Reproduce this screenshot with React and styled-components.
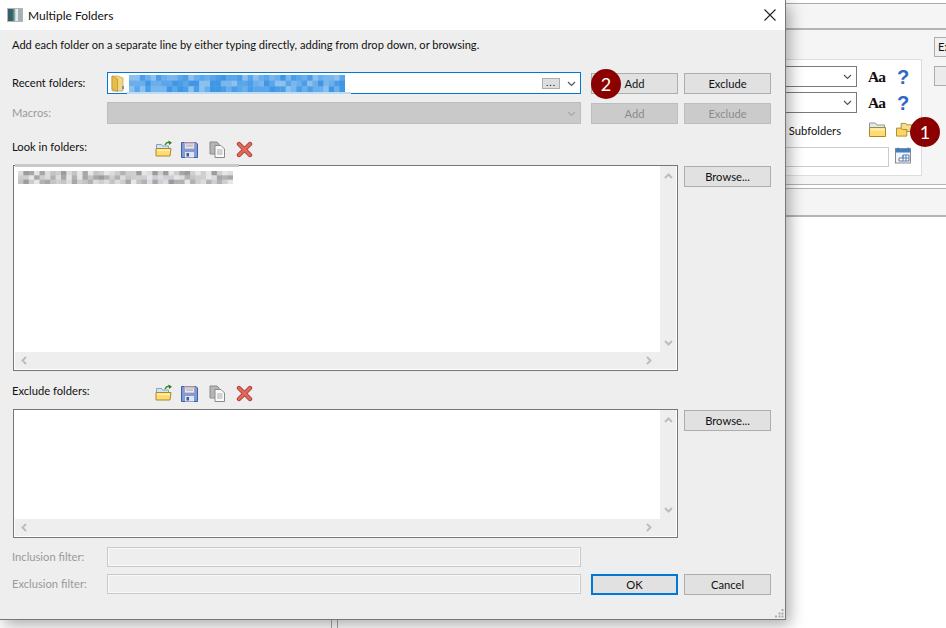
import React from "react";
import styled, { createGlobalStyle } from "styled-components";

const GlobalStyle = createGlobalStyle`
  html, body { margin: 0; padding: 0; background: #fff; }
  body { font-family: "Lato", "Noto Sans", sans-serif; font-size: 11.2px; color: #111; }
`;

// seeded noise so the blurred out paths stay the same every render
function noise(seed) {
  let s = seed;
  return () => {
    s = (s * 9301 + 49297) % 233280;
    return s / 233280;
  };
}

function Mosaic({ width, height, cols, rows, colors, seed }) {
  const rand = noise(seed);
  const cw = width / cols;
  const ch = height / rows;
  const cells = [];
  for (let y = 0; y < rows; y++) {
    for (let x = 0; x < cols; x++) {
      cells.push(
        <rect
          key={x + "-" + y}
          x={x * cw}
          y={y * ch}
          width={cw + 0.5}
          height={ch + 0.5}
          fill={colors[Math.floor(rand() * colors.length)]}
        />
      );
    }
  }
  return (
    <svg width={width} height={height} style={{ display: "block" }}>
      {cells}
    </svg>
  );
}

const Chevron = ({ dir = "down", color = "#555", size = 11, width = 1.2 }) => {
  const d = {
    down: "M2 4l3.5 3.5L9 4",
    up: "M2 7l3.5-3.5L9 7",
    left: "M7 2L3.5 5.5 7 9",
    right: "M4 2l3.5 3.5L4 9",
  }[dir];
  return (
    <svg width={size} height={size} viewBox="0 0 11 11">
      <path d={d} fill="none" stroke={color} strokeWidth={width} />
    </svg>
  );
};

const FolderOpenIcon = () => (
  <svg width="18" height="18" viewBox="0 0 18 18">
    <path d="M1.5 4.5h5l1 1.5h6v3h-12z" fill="#cfe4f5" stroke="#8aa2b5" />
    <path d="M1 8.5h15l-1 7.5H1z" fill="#ffdb70" stroke="#a98a2a" />
    <path d="M2 9.5h13l-.2 1.5H2z" fill="#fff0b8" />
    <path d="M10 5c1-2 3-3 5-2.500" fill="none" stroke="#3d8a2c" strokeWidth="1.500" />
    <path d="M13.500 .5L17 2.800l-3 2.200z" fill="#2f7d22" />
  </svg>
);

const SaveIcon = () => (
  <svg width="17" height="17" viewBox="0 0 17 17">
    <path d="M.5 1.500h14.500l1.500 1.500v13.500H.5z" fill="#7f9cd8" stroke="#41609f" />
    <rect x="3.500" y="1.500" width="10" height="6.500" fill="#ece6ee" stroke="#9a8fa8" strokeWidth=".7" />
    <path d="M3.500 2h10v1.500h-10z" fill="#d8b4c4" />
    <path d="M5 5h7" stroke="#9aa" />
    <rect x="4" y="11" width="9" height="5.500" fill="#dfe5f2" />
    <rect x="5.500" y="12" width="2.500" height="3.500" fill="#44598c" />
  </svg>
);

const CopyIcon = () => (
  <svg width="17" height="17" viewBox="0 0 17 17">
    <path d="M1 1h7l2 2v10H1z" fill="#b5b5b5" stroke="#8a8a8a" />
    <path d="M6 4.500h6l3.500 3.500v8.500H6z" fill="#fafafa" stroke="#8a8a8a" />
    <path d="M8 9h5.500M8 11h5.500M8 13h5.500" stroke="#a8a8a8" />
  </svg>
);

const DeleteIcon = () => (
  <svg width="17" height="17" viewBox="0 0 17 17">
    <path d="M3 3l11 11M14 3L3 14" stroke="#a33a30" strokeWidth="4.400" strokeLinecap="round" />
    <path d="M3 3l11 11M14 3L3 14" stroke="#e2685c" strokeWidth="2.800" strokeLinecap="round" />
  </svg>
);

const ComboFolderIcon = () => (
  <svg width="14" height="17" viewBox="0 0 14 17">
    <path d="M1 1h6l5 2v13H1z" fill="#f2d681" stroke="#c6a94e" strokeWidth=".8" />
    <path d="M1 1l5.500 3v12.500L1 14z" fill="#e8bd4a" stroke="#b89637" strokeWidth=".8" />
    <rect x="11" y="11" width="2" height="3" fill="#5a9ad0" />
  </svg>
);

const PlainFolderIcon = () => (
  <svg width="17" height="16" viewBox="0 0 17 16">
    <path d="M.5 1h6l1.500 2h7.500v3H.5z" fill="#dce9f4" stroke="#8f9aa5" />
    <path d="M.5 5.500h16v9H.5z" fill="#ffdb70" stroke="#a98a2a" />
    <path d="M1.500 6.500h14v2h-14z" fill="#fff0b8" />
  </svg>
);

const TwoFoldersIcon = () => (
  <svg width="16" height="16" viewBox="0 0 17 16">
    <path d="M5.500 1h5l1 1.500h5v7h-11z" fill="#f6dd92" stroke="#a98a2a" />
    <path d="M.5 6h5l1 1.500h5v7H.5z" fill="#ffd566" stroke="#a98a2a" />
  </svg>
);

const CalendarIcon = () => (
  <svg width="17" height="17" viewBox="0 0 17 17">
    <rect x=".5" y="1.500" width="15" height="14.500" fill="#f4f4f4" stroke="#8c8c8c" />
    <path d="M.5 2h15v3.500H.5z" fill="#3e7fc9" />
    <path d="M3 .5v2.500M13 .5v2.500" stroke="#3a6ca5" />
    <path d="M8 8h6v6H4v-3h4z" fill="#fff" stroke="#5a7fb0" />
    <path d="M8 11h6M8 8v6M11 8v6" stroke="#5a7fb0" />
  </svg>
);

const GripDots = () => (
  <svg width="9" height="9" viewBox="0 0 9 9" fill="#aaa">
    <rect x="6.500" y="0" width="2" height="2" />
    <rect x="3.500" y="3.500" width="2" height="2" />
    <rect x="6.500" y="3.500" width="2" height="2" />
    <rect x="0" y="6.500" width="2" height="2" />
    <rect x="3.500" y="6.500" width="2" height="2" />
    <rect x="6.500" y="6.500" width="2" height="2" />
  </svg>
);

function App() {
  return (
    <Screen>
      <GlobalStyle />
      <BackWindow>
        <TopStrip />
        <ToolStrip />
        <SearchArea>
          <SearchPanel>
            <PanelRow>
              <BackSelect>
                <Chevron />
              </BackSelect>
              <AaGlyph>Aa</AaGlyph>
              <HelpGlyph>?</HelpGlyph>
            </PanelRow>
            <PanelRow>
              <BackSelect>
                <Chevron />
              </BackSelect>
              <AaGlyph>Aa</AaGlyph>
              <HelpGlyph>?</HelpGlyph>
            </PanelRow>
            <FolderRow>
              <SubfolderBox />
              <SubfolderLabel>Subfolders</SubfolderLabel>
              <PlainFolderIcon />
              <TwoFoldersIcon />
            </FolderRow>
            <DateRow>
              <BackInput />
              <CalendarIcon />
            </DateRow>
          </SearchPanel>
          <SideButtons>
            <SideButton>Exclude</SideButton>
            <SideButton $tinted />
          </SideButtons>
        </SearchArea>
        <SplitStrip />
        <ResultPanes>
          <LeftPane />
          <Splitter />
        </ResultPanes>
      </BackWindow>

      <Badge $right={6} $top={117}>1</Badge>

      <Dialog>
        <TitleBar>
          <TitleIcon />
          <TitleText>Multiple Folders</TitleText>
          <CloseButton>
            <svg width="12" height="12" viewBox="0 0 12 12">
              <path d="M.5.5l11 11M11.500.5l-11 11" stroke="#222" strokeWidth="1.100" />
            </svg>
          </CloseButton>
        </TitleBar>

        <DialogBody>
          <Hint>Add each folder on a separate line by either typing directly, adding from drop down, or browsing.</Hint>

          <FieldRow $gap={19}>
            <FieldLabel>Recent folders:</FieldLabel>
            <Combo $focused>
              <ComboIconSlot>
                <ComboFolderIcon />
              </ComboIconSlot>
              <Selection>
                <Mosaic
                  width={216}
                  height={17}
                  cols={40}
                  rows={3}
                  seed={17}
                  colors={["#4a9de6", "#5aa6ea", "#6aaeeb", "#78b6ed", "#3f96e4", "#8cc0ee"]}
                />
                <SelectionEdge />
              </Selection>
              <EllipsisButton>...</EllipsisButton>
              <ComboArrow>
                <Chevron />
              </ComboArrow>
            </Combo>
            <ActionButton>Add</ActionButton>
            <ActionButton $narrowGap>Exclude</ActionButton>
          </FieldRow>

          <FieldRow $gap={8}>
            <FieldLabel $disabled>Macros:</FieldLabel>
            <Combo $disabled>
              <Spacer />
              <ComboArrow>
                <Chevron color="#a9a9a9" />
              </ComboArrow>
            </Combo>
            <ActionButton $disabled>Add</ActionButton>
            <ActionButton $disabled $narrowGap>Exclude</ActionButton>
          </FieldRow>

          <SectionHeader $gap={15}>
            <SectionLabel>Look in folders:</SectionLabel>
            <IconBar>
              <FolderOpenIcon />
              <SaveIcon />
              <CopyIcon />
              <DeleteIcon />
            </IconBar>
          </SectionHeader>

          <ListRow>
            <ListBox $height={206}>
              <ListTopSmear />
              <ListText>
                <Mosaic
                  width={215}
                  height={13}
                  cols={40}
                  rows={3}
                  seed={5}
                  colors={["#c4c4c2", "#cfcdcb", "#b4b1b6", "#dedbdb", "#a9a6aa", "#cbd0d5", "#e6e6e6", "#9d9aa0"]}
                />
              </ListText>
              <VScroll>
                <Chevron dir="up" color="#bdbdbd" width={2} />
                <Chevron dir="down" color="#bdbdbd" width={2} />
              </VScroll>
              <HScroll>
                <Chevron dir="left" color="#bdbdbd" width={2} />
                <Chevron dir="right" color="#bdbdbd" width={2} />
              </HScroll>
            </ListBox>
            <ActionButton $narrowGap>Browse...</ActionButton>
          </ListRow>

          <SectionHeader $gap={12}>
            <SectionLabel>Exclude folders:</SectionLabel>
            <IconBar>
              <FolderOpenIcon />
              <SaveIcon />
              <CopyIcon />
              <DeleteIcon />
            </IconBar>
          </SectionHeader>

          <ListRow>
            <ListBox $height={129}>
              <VScroll>
                <Chevron dir="up" color="#bdbdbd" width={2} />
                <Chevron dir="down" color="#bdbdbd" width={2} />
              </VScroll>
              <HScroll>
                <Chevron dir="left" color="#bdbdbd" width={2} />
                <Chevron dir="right" color="#bdbdbd" width={2} />
              </HScroll>
            </ListBox>
            <ActionButton $narrowGap>Browse...</ActionButton>
          </ListRow>

          <FilterRow $gap={9}>
            <FieldLabel $disabled>Inclusion filter:</FieldLabel>
            <FilterInput />
          </FilterRow>
          <FilterRow $gap={6}>
            <FieldLabel $disabled>Exclusion filter:</FieldLabel>
            <FilterInput />
            <DefaultButton>OK</DefaultButton>
            <ActionButton $narrowGap $flush>Cancel</ActionButton>
          </FilterRow>
        </DialogBody>

        <Grip>
          <GripDots />
        </Grip>
        <Badge $left={591} $top={69}>2</Badge>
      </Dialog>
    </Screen>
  );
}

const Screen = styled.div`
  position: relative;
  width: 946px;
  height: 628px;
  overflow: hidden;
  background: #fff;
`;

const BackWindow = styled.div`
  display: flex;
  flex-direction: column;
  height: 100%;
`;

const TopStrip = styled.div`
  height: 3px;
  border-bottom: 1px solid #ababab;
`;

const ToolStrip = styled.div`
  height: 24px;
  background: #f5f5f5;
  border-bottom: 2px solid #b4b4b4;
`;

const SearchArea = styled.div`
  display: flex;
  justify-content: flex-end;
  height: 154px;
  background: #f5f5f5;
  border-bottom: 1px solid #b4b4b4;
  box-sizing: content-box;
`;

const SearchPanel = styled.div`
  width: 522px;
  height: 117px;
  margin: 29px 0 0;
  padding: 6px 0 0;
  background: #fff;
  border: 1px solid #ddd;
  box-sizing: border-box;
  display: flex;
  flex-direction: column;
  align-items: flex-end;
`;

const PanelRow = styled.div`
  display: flex;
  align-items: center;
  height: 21px;
  margin-bottom: 5px;
  padding-right: 12px;
`;

const BackSelect = styled.div`
  width: 300px;
  height: 21px;
  box-sizing: border-box;
  border: 1px solid #7a7a7a;
  display: flex;
  align-items: center;
  justify-content: flex-end;
  padding-right: 3px;
`;

const AaGlyph = styled.span`
  width: 17px;
  margin-left: 11px;
  font-family: "Liberation Serif", serif;
  font-weight: 700;
  font-size: 15.500px;
  letter-spacing: -0.9px;
  color: #111;
`;

const HelpGlyph = styled.span`
  width: 12px;
  margin-left: 12px;
  font-family: "Liberation Sans", sans-serif;
  font-weight: 700;
  font-size: 20px;
  line-height: 20px;
  color: #2f67c8;
`;

const FolderRow = styled.div`
  display: flex;
  align-items: center;
  height: 24px;
  padding-right: 9px;

  svg:nth-of-type(1) { margin-left: 28px; }
  svg:nth-of-type(2) { margin-left: 10px; }
`;

const SubfolderBox = styled.div`
  width: 10px;
  height: 11px;
  margin-right: 3px;
  box-sizing: border-box;
  border: 1px solid #333;
`;

const SubfolderLabel = styled.span`
  color: #111;
`;

const DateRow = styled.div`
  display: flex;
  align-items: flex-start;
  margin-top: 5px;
  padding-right: 9px;

  svg { margin-left: 6px; }
`;

const BackInput = styled.div`
  width: 300px;
  height: 20px;
  box-sizing: border-box;
  border: 1px solid #ccc;
`;

const SideButtons = styled.div`
  display: flex;
  flex-direction: column;
  gap: 9px;
  width: 12px;
  margin: 7px 0 0 12px;
  overflow: hidden;
`;

const SideButton = styled.div`
  width: 60px;
  height: 20px;
  line-height: 18px;
  padding-left: 3px;
  box-sizing: border-box;
  background: ${(p) => (p.$tinted ? "#ebebeb" : "#f0f0f0")};
  border: 1px solid #adadad;
`;

const SplitStrip = styled.div`
  height: 26px;
  margin-top: 3px;
  background: #f5f5f5;
  border-top: 1px solid #b4b4b4;
  border-bottom: 2px solid #b4b4b4;
`;

const ResultPanes = styled.div`
  flex: 1;
  display: flex;
`;

const LeftPane = styled.div`
  width: 331px;
`;

const Splitter = styled.div`
  width: 5px;
  border-left: 1px solid #a8a8a8;
  border-right: 1px solid #a8a8a8;
`;

const Dialog = styled.div`
  position: absolute;
  left: 0;
  top: 0;
  width: 786px;
  height: 620px;
  box-sizing: border-box;
  display: flex;
  flex-direction: column;
  background: #eeeeee;
  border-right: 1px solid #777;
  border-bottom: 1px solid #777;
  box-shadow: 4px 5px 14px rgba(0, 0, 0, 0.32);
`;

const TitleBar = styled.div`
  display: flex;
  align-items: center;
  height: 30px;
  flex: none;
  padding: 0 9px 0 7px;
  background: #fff;
`;

const TitleIcon = styled.div`
  width: 14px;
  height: 12px;
  border: 1px solid #b5b5b5;
  background: linear-gradient(90deg, #34606a 0 30%, #8db3a8 50%, #e6eaea 55% 75%, #a4b2b6 75%);
`;

const TitleText = styled.div`
  flex: 1;
  margin-left: 5px;
  font-size: 12px;
  color: #111;
`;

const CloseButton = styled.div`
  display: flex;
`;

const DialogBody = styled.div`
  flex: 1;
  padding: 7px 0 0 12px;
`;

const Hint = styled.div`
  height: 16px;
  line-height: 16px;
  font-size: 11.100px;
  white-space: nowrap;
`;

const FieldRow = styled.div`
  display: flex;
  align-items: flex-start;
  height: 22px;
  margin-top: ${(p) => p.$gap}px;
`;

const FieldLabel = styled.div`
  width: 95px;
  flex: none;
  line-height: 21px;
  white-space: nowrap;
  color: ${(p) => (p.$disabled ? "#9a9a9a" : "#111")};
`;

const Combo = styled.div`
  position: relative;
  display: flex;
  align-items: center;
  width: 474px;
  height: 22px;
  box-sizing: border-box;
  background: ${(p) => (p.$disabled ? "#c9c9c9" : "#fff")};
  border: 1px solid ${(p) => (p.$focused ? "#0078d7" : p.$disabled ? "#bdbdbd" : "#7a7a7a")};
`;

const ComboIconSlot = styled.div`
  display: flex;
  margin-left: 3px;
  width: 18px;
  flex: none;
`;

const Selection = styled.div`
  position: relative;
  flex: 1;
  height: 17px;
  margin-top: 2px;
  align-self: flex-start;
`;

const SelectionEdge = styled.div`
  width: 224px;
  height: 2px;
  margin-left: -2px;
  background: #bcdcf2;
`;

const EllipsisButton = styled.div`
  width: 18px;
  height: 11px;
  box-sizing: border-box;
  line-height: 6px;
  font-size: 10px;
  letter-spacing: 1px;
  text-align: center;
  background: #dedede;
  border: 1px solid #adadad;
  flex: none;
`;

const ComboArrow = styled.div`
  width: 20px;
  padding-left: 3px;
  box-sizing: border-box;
  flex: none;
  display: flex;
  justify-content: center;
`;

const Spacer = styled.div`
  flex: 1;
`;

const ActionButton = styled.div`
  width: 87px;
  height: 21px;
  margin-top: ${(p) => (p.$flush ? 0 : 1)}px;
  margin-left: ${(p) => (p.$narrowGap ? 6 : 10)}px;
  box-sizing: border-box;
  flex: none;
  text-align: center;
  line-height: 19px;
  color: ${(p) => (p.$disabled ? "#8b8b8b" : "#111")};
  background: ${(p) => (p.$disabled ? "#cbcbcb" : "#e1e1e1")};
  border: 1px solid ${(p) => (p.$disabled ? "#bdbdbd" : "#adadad")};
`;

const DefaultButton = styled.div`
  width: 87px;
  height: 21px;
  margin-left: 10px;
  box-sizing: border-box;
  flex: none;
  text-align: center;
  line-height: 17px;
  color: #111;
  background: #e1e1e1;
  border: 2px solid #0078d7;
`;

const SectionHeader = styled.div`
  display: flex;
  height: 20px;
  margin-top: ${(p) => p.$gap}px;
`;

const SectionLabel = styled.div`
  width: 143px;
  flex: none;
  line-height: 16px;
`;

const IconBar = styled.div`
  display: flex;
  align-items: center;
  gap: 9px;
  height: 20px;

  svg:nth-child(2) { margin-left: -1px; }
  svg:nth-child(3) { margin-left: 2px; }
  svg:nth-child(4) { margin-left: 1px; }
`;

const ListRow = styled.div`
  display: flex;
  align-items: flex-start;
  margin-top: 6px;
`;

const ListBox = styled.div`
  position: relative;
  width: 665px;
  height: ${(p) => p.$height}px;
  margin-left: 1px;
  box-sizing: border-box;
  background: #fff;
  border: 1px solid #777;
`;

const ListTopSmear = styled.div`
  position: absolute;
  left: 1px;
  top: -2px;
  width: 224px;
  height: 3px;
  background: #c9c9c9;
`;

const ListText = styled.div`
  padding: 5px 0 0 4px;
`;

const VScroll = styled.div`
  position: absolute;
  top: 0;
  right: 1px;
  bottom: 18px;
  width: 16px;
  display: flex;
  flex-direction: column;
  align-items: center;
  justify-content: space-between;
  padding: 5px 0 4px;
  box-sizing: border-box;
  background: #eeeeee;
`;

const HScroll = styled.div`
  position: absolute;
  left: 1px;
  right: 1px;
  bottom: 1px;
  height: 17px;
  display: flex;
  align-items: center;
  justify-content: space-between;
  padding: 0 22px 0 4px;
  box-sizing: border-box;
  background: #eeeeee;
`;

const FilterRow = styled.div`
  display: flex;
  align-items: flex-start;
  height: 21px;
  line-height: 20px;
  margin-top: ${(p) => p.$gap}px;

  ${FieldLabel} { line-height: 20px; }
`;

const FilterInput = styled.div`
  width: 474px;
  height: 20px;
  flex: none;
  box-sizing: border-box;
  background: #eeeeee;
  border: 1px solid #c9c9c9;
  box-shadow: inset 0 0 0 1px #f8f8f8;
`;

const Grip = styled.div`
  position: absolute;
  right: 1px;
  bottom: 1px;
  display: flex;
`;

const Badge = styled.div`
  position: absolute;
  ${(p) => (p.$left !== undefined ? `left: ${p.$left}px;` : "")}
  ${(p) => (p.$right !== undefined ? `right: ${p.$right}px;` : "")}
  top: ${(p) => p.$top}px;
  width: 30px;
  height: 30px;
  border-radius: 50%;
  background: #8b0000;
  color: #fff;
  font-size: 18px;
  line-height: 30px;
  text-align: center;
`;

export default App;
